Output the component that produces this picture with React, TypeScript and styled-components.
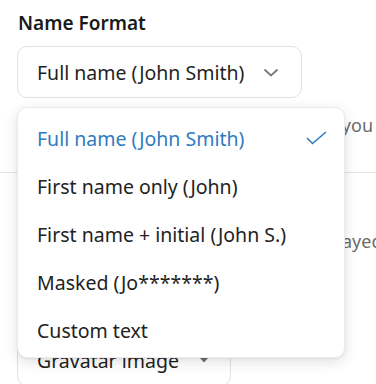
import React, { useState } from 'react';
import styled, { createGlobalStyle } from 'styled-components';

const GlobalStyle = createGlobalStyle`
  html, body {
    margin: 0;
    padding: 0;
    background: #ffffff;
  }
  body {
    font-family: 'Noto Sans', 'Open Sans', Arial, sans-serif;
    color: #1f1f1f;
    overflow: hidden;
  }
`;

const Page = styled('div')`
  width: 376px;
  height: 384px;
  overflow: hidden;
  padding: 11px 0 0 17px;
  box-sizing: border-box;
`;

const Section = styled('section')`
  display: flex;
  flex-direction: column;
  align-items: flex-start;
`;

const Label = styled('h3')`
  margin: 0 0 11px 1px;
  font-size: 19px;
  line-height: 24px;
  font-weight: 600;
  color: #1a1a1a;
`;

const SelectWrap = styled('div')`
  position: relative;
`;

const SelectButton = styled('button')<{ $width: number }>`
  appearance: none;
  display: flex;
  align-items: center;
  justify-content: space-between;
  box-sizing: border-box;
  width: ${(p) => p.$width}px;
  height: 52px;
  padding: 0 22px 0 19px;
  border: 1px solid #e2e2e2;
  border-radius: 10px;
  background: #fff;
  font-family: inherit;
  font-size: 19.5px;
  color: #1f1f1f;
  cursor: pointer;
`;

const Helper = styled('p')<{ $top: number }>`
  margin: ${(p) => p.$top}px 0 0 1px;
  font-size: 18px;
  line-height: 24px;
  color: #6b6b6b;
  white-space: nowrap;
`;

const Divider = styled('hr')`
  margin: 35px 0 0 -17px;
  width: 376px;
  border: 0;
  border-top: 1px solid #e6e6e6;
`;

const Menu = styled('ul')`
  position: absolute;
  top: 61px;
  left: 0;
  z-index: 10;
  box-sizing: border-box;
  width: 328px;
  margin: 0;
  padding: 6px 0 3px;
  list-style: none;
  background: #fff;
  border: 1px solid #ececec;
  border-radius: 10px;
  box-shadow: 0 4px 14px rgba(0, 0, 0, 0.12), 0 1px 3px rgba(0, 0, 0, 0.06);
`;

const MenuItem = styled('li')<{ $selected?: boolean }>`
  display: flex;
  align-items: center;
  justify-content: space-between;
  height: 48px;
  padding: 0 17px 0 19px;
  font-size: 19.5px;
  color: ${(p) => (p.$selected ? '#2f7bbf' : '#222')};
  cursor: pointer;
`;

const Chevron = () => (
  <svg width="16" height="9" viewBox="0 0 16 9" fill="none">
    <polyline points="1.5,1.5 8,7.5 14.5,1.5" stroke="#7a7a7a" strokeWidth="1.8" />
  </svg>
);

const Caret = () => (
  <svg width="8" height="5" viewBox="0 0 8 5">
    <polygon points="0,0 8,0 4,4.5" fill="#6e6e6e" />
  </svg>
);

const Check = () => (
  <svg width="21" height="14" viewBox="0 0 21 14" fill="none">
    <polyline points="1,7 6.5,12.5 20,1" stroke="#2f7bbf" strokeWidth="1.6" />
  </svg>
);

const options = [
  'Full name (John Smith)',
  'First name only (John)',
  'First name + initial (John S.)',
  'Masked (Jo*******)',
  'Custom text',
];

export default function App() {
  const [selected, setSelected] = useState(0);
  const [open, setOpen] = useState(true);
  return (
    <>
      <GlobalStyle />
      <Page>
        <Section>
          <Label>Name Format</Label>
          <SelectWrap>
            <SelectButton $width={285} onClick={() => setOpen(!open)}>
              <span>{options[selected]}</span>
              <Chevron />
            </SelectButton>
            {open && (
              <Menu>
                {options.map((o, i) => (
                  <MenuItem
                    key={o}
                    $selected={i === selected}
                    onClick={() => {
                      setSelected(i);
                      setOpen(false);
                    }}
                  >
                    {o}
                    {i === selected && <Check />}
                  </MenuItem>
                ))}
              </Menu>
            )}
          </SelectWrap>
          <Helper $top={15}>Choose how your name will appear to you</Helper>
        </Section>
        <Divider />
        <Section>
          <Label style={{ marginTop: 12 }}>Avatar</Label>
          <Helper $top={9}>Choose how your profile photo is displayed</Helper>
          <SelectWrap style={{ marginTop: 81 }}>
            <SelectButton $width={214}>
              <span>Gravatar image</span>
              <Caret />
            </SelectButton>
          </SelectWrap>
        </Section>
      </Page>
    </>
  );
}
